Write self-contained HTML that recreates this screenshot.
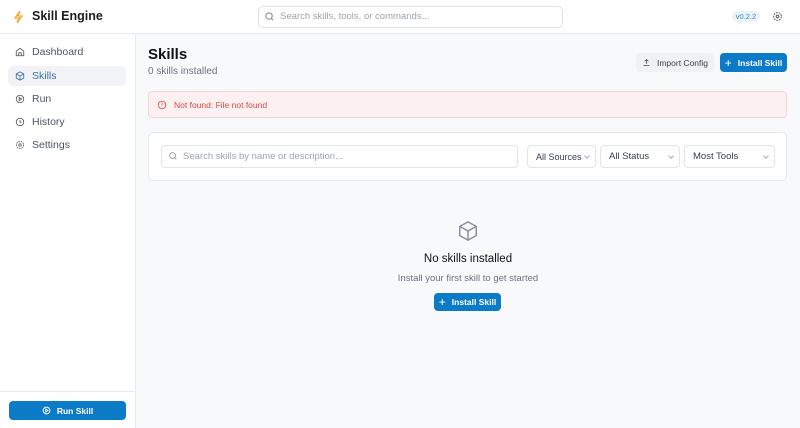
<!DOCTYPE html>
<html><head><style>
*{box-sizing:border-box;margin:0;padding:0}
body{width:800px;height:428px;overflow:hidden;font-family:"Liberation Sans",sans-serif;background:#f8f9fb;position:relative;color:#1f2328}
.abs{position:absolute}
header{position:absolute;left:0;top:0;width:800px;height:34px;background:#fff;border-bottom:1px solid #e8eaee}
aside{position:absolute;left:0;top:34px;width:136px;height:394px;background:#fff;border-right:1px solid #e8eaee}
.nav{position:absolute;left:8px;width:118px;height:20px;border-radius:5px;font-size:10.5px;color:#4b5563;display:flex;align-items:center;padding-left:7px}
.nav svg{margin-right:7px}
.btn{position:absolute;border-radius:4px;font-size:8.5px;font-weight:bold;display:flex;align-items:center;justify-content:center;gap:6px}
.blue{background:#0c7bc7;color:#fff}
.sel{position:absolute;top:145px;height:23px;background:#fff;border:1px solid #e1e4e8;border-radius:4px;font-size:9.5px;color:#374151;display:flex;align-items:center;padding-left:8px;white-space:nowrap}
.sel:after{content:"";position:absolute;right:6px;top:8px;width:3px;height:3px;border-right:1px solid #aaa;border-bottom:1px solid #aaa;transform:rotate(45deg)}
</style></head><body>
<header>
<svg class="abs" style="left:13px;top:10px" width="10" height="14" viewBox="0 0 10 14" fill="none" stroke="#f5a623" stroke-width="1.2"><path d="M7 1L2 8h4l-2 5 5-7H5z"/></svg>
<div class="abs" style="left:32px;top:9px;font-size:12.5px;font-weight:bold;color:#1a1d21">Skill Engine</div>
<div class="abs" style="left:258px;top:6px;width:305px;height:22px;border:1px solid #dfe2e6;border-radius:5px;background:#fff"></div>
<svg class="abs" style="left:264px;top:11px" width="11" height="11" viewBox="0 0 24 24" fill="none" stroke="#888" stroke-width="2.2"><circle cx="11" cy="11" r="7"/><path d="M20 20l-4-4"/></svg>
<div class="abs" style="left:280px;top:11px;font-size:9.5px;color:#9ca3af">Search skills, tools, or commands...</div>
<div class="abs" style="left:732px;top:11px;width:28px;height:11px;border-radius:6px;background:#eaf3fb;color:#3b82c4;font-size:7.5px;text-align:center;line-height:11px">v0.2.2</div>
<svg class="abs" style="left:772px;top:11px" width="11" height="11" viewBox="0 0 24 24" fill="none" stroke="#555" stroke-width="2"><circle cx="12" cy="12" r="3"/><circle cx="12" cy="12" r="8.5" stroke-dasharray="4 2"/></svg>
</header>
<aside>
<div class="nav" style="top:8px"><svg width="10" height="10" viewBox="0 0 24 24" fill="none" stroke="#555" stroke-width="2"><path d="M3 10l9-7 9 7v11H3z"/><path d="M9 21v-7h6v7"/></svg>Dashboard</div>
<div class="nav" style="top:32px;background:#f1f3f6;color:#3a6ea5"><svg width="10" height="10" viewBox="0 0 24 24" fill="none" stroke="#3a6ea5" stroke-width="2"><path d="M12 2l9 5v10l-9 5-9-5V7z"/><path d="M3 7l9 5 9-5M12 12v10"/></svg>Skills</div>
<div class="nav" style="top:55px"><svg width="10" height="10" viewBox="0 0 24 24" fill="none" stroke="#555" stroke-width="2"><circle cx="12" cy="12" r="9"/><path d="M10 8l6 4-6 4z"/></svg>Run</div>
<div class="nav" style="top:78px"><svg width="10" height="10" viewBox="0 0 24 24" fill="none" stroke="#555" stroke-width="2"><circle cx="12" cy="12" r="9"/><path d="M12 7v5l3 2"/></svg>History</div>
<div class="nav" style="top:101px"><svg width="10" height="10" viewBox="0 0 24 24" fill="none" stroke="#555" stroke-width="2"><circle cx="12" cy="12" r="3"/><circle cx="12" cy="12" r="8.5" stroke-dasharray="4 2"/></svg>Settings</div>
<div class="abs" style="left:0;top:357px;width:135px;border-top:1px solid #e8eaee"></div>
<div class="btn blue" style="left:9px;top:367px;width:117px;height:19px"><svg width="9" height="9" viewBox="0 0 24 24" fill="none" stroke="#fff" stroke-width="2.5"><circle cx="12" cy="12" r="9"/><path d="M10 8l6 4-6 4z"/></svg>Run Skill</div>
</aside>
<div class="abs" style="left:148px;top:46px;font-size:15px;font-weight:bold;color:#111">Skills</div>
<div class="abs" style="left:148px;top:66px;font-size:10px;color:#6b7280">0 skills installed</div>
<div class="btn" style="left:636px;top:53px;width:78px;height:19px;background:#f0f1f3;color:#374151;font-weight:normal"><svg width="9" height="9" viewBox="0 0 24 24" fill="none" stroke="#444" stroke-width="2"><path d="M12 16V4M7 9l5-5 5 5M4 20h16"/></svg>Import Config</div>
<div class="btn blue" style="left:720px;top:53px;width:67px;height:19px"><span style="font-size:12px;font-weight:normal">+</span>Install Skill</div>
<div class="abs" style="left:148px;top:91px;width:639px;height:27px;background:#fdf0f0;border:1px solid #f6d3d3;border-radius:4px"></div>
<svg class="abs" style="left:157px;top:100px" width="10" height="10" viewBox="0 0 24 24" fill="none" stroke="#dc4a4a" stroke-width="2"><circle cx="12" cy="12" r="9"/><path d="M12 7v6M12 16v1"/></svg>
<div class="abs" style="left:174px;top:100px;font-size:8.5px;color:#d44848">Not found: File not found</div>
<div class="abs" style="left:148px;top:132px;width:639px;height:49px;background:#fff;border:1px solid #e5e7eb;border-radius:5px"></div>
<div class="abs" style="left:161px;top:145px;width:357px;height:23px;background:#fff;border:1px solid #e1e4e8;border-radius:4px"></div>
<svg class="abs" style="left:168px;top:151px" width="10" height="10" viewBox="0 0 24 24" fill="none" stroke="#999" stroke-width="2.2"><circle cx="11" cy="11" r="7"/><path d="M20 20l-4-4"/></svg>
<div class="abs" style="left:183px;top:151px;font-size:9.5px;color:#9ca3af">Search skills by name or description...</div>
<div class="sel" style="left:527px;width:69px;font-size:9px">All Sources</div>
<div class="sel" style="left:600px;width:80px">All Status</div>
<div class="sel" style="left:684px;width:91px">Most Tools</div>
<svg class="abs" style="left:457px;top:220px" width="22" height="22" viewBox="0 0 24 24" fill="none" stroke="#8a9099" stroke-width="1.6"><path d="M12 2l9 5v10l-9 5-9-5V7z"/><path d="M3 7l9 5 9-5M12 12v10"/></svg>
<div class="abs" style="left:368px;top:253px;width:200px;text-align:center;font-size:11.5px;color:#111">No skills installed</div>
<div class="abs" style="left:338px;top:273px;width:260px;text-align:center;font-size:9.5px;color:#6b7280">Install your first skill to get started</div>
<div class="btn blue" style="left:434px;top:293px;width:67px;height:18px"><span style="font-size:12px;font-weight:normal">+</span>Install Skill</div>
</body></html>
